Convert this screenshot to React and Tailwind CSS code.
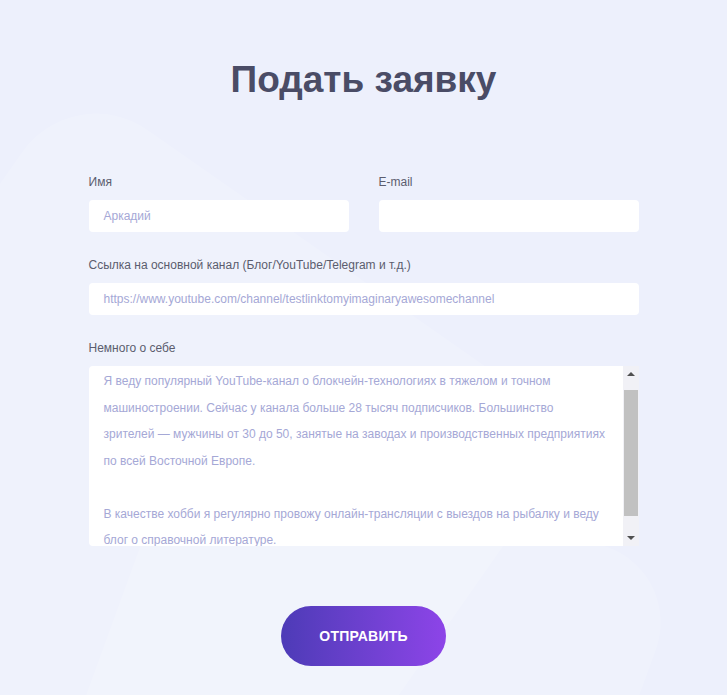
import { useState } from "react";

const about = [
  "Я веду популярный YouTube-канал о блокчейн-технологиях в тяжелом и точном машиностроении. Сейчас у канала больше 28 тысяч подписчиков. Большинство зрителей — мужчины от 30 до 50, занятые на заводах и производственных предприятиях по всей Восточной Европе.",
  "",
  "В качестве хобби я регулярно провожу онлайн-трансляции с выездов на рыбалку и веду блог о справочной литературе.",
];

function Label({ children }) {
  return <div className="text-[12px] leading-4 text-[#5b5d6e] mb-[10px]">{children}</div>;
}

function Field({ value }) {
  return (
    <div className="h-8 bg-white rounded-[4px] px-[15px] flex items-center text-[12px] text-[#a5a8d6] whitespace-nowrap overflow-hidden">
      {value}
    </div>
  );
}

function App() {
  const [sent, setSent] = useState(false);

  return (
    <div
      className="relative min-h-[695px] w-full overflow-hidden bg-[#edf0fc]"
      style={{ fontFamily: '"Liberation Sans", Arial, sans-serif' }}
    >
      {/* soft background shapes */}
      <div className="absolute left-[-160px] top-[200px] w-[620px] h-[620px] rounded-[90px] rotate-[35deg] bg-white/15" />
      <div className="absolute left-[90px] top-[470px] w-[520px] h-[520px] rounded-[80px] rotate-[20deg] bg-white/15" />

      <div className="relative w-[550px] mx-auto pt-[56px] pb-[29px]">
        <h1 className="text-center text-[37px] leading-[48px] font-bold text-[#4a4c66]">Подать заявку</h1>

        <div className="mt-[70px] grid grid-cols-2 gap-x-[30px]">
          <div>
            <Label>Имя</Label>
            <Field value="Аркадий" />
          </div>
          <div>
            <Label>E-mail</Label>
            <Field value="" />
          </div>
        </div>

        <div className="mt-[25px]">
          <Label>Ссылка на основной канал (Блог/YouTube/Telegram и т.д.)</Label>
          <Field value="https://www.youtube.com/channel/testlinktomyimaginaryawesomechannel" />
        </div>

        <div className="mt-[25px]">
          <Label>Немного о себе</Label>
          <div className="flex h-[180px]">
            <div className="flex-1 bg-white rounded-l-[4px] overflow-hidden px-[15px]">
              <div className="mt-[2px] text-[12px] leading-[26.5px] text-[#a5a8d6]">
                {about.map((p, i) => (
                  <p key={i} className="min-h-[26.5px]">{p}</p>
                ))}
              </div>
            </div>
            <div className="w-4 bg-[#f1f1f6] flex flex-col items-center">
              <div className="h-4 flex items-center justify-center">
                <div className="w-0 h-0 border-l-[4px] border-r-[4px] border-b-[4px] border-l-transparent border-r-transparent border-b-[#505050]" />
              </div>
              <div className="mt-[8px] w-[14px] h-[126px] bg-[#c1c1c1]" />
              <div className="flex-1" />
              <div className="h-4 flex items-center justify-center">
                <div className="w-0 h-0 border-l-[4px] border-r-[4px] border-t-[4px] border-l-transparent border-r-transparent border-t-[#505050]" />
              </div>
            </div>
          </div>
        </div>

        <div className="mt-[60px] flex justify-center">
          <button
            onClick={() => setSent(true)}
            className="w-[165px] h-[60px] rounded-full bg-gradient-to-r from-[#4d3bb7] to-[#8d44e8] text-white text-[14px] font-bold tracking-[0.2px] cursor-pointer"
          >
            {sent ? "ОТПРАВЛЕНО" : "ОТПРАВИТЬ"}
          </button>
        </div>
      </div>
    </div>
  );
}

export default App;
